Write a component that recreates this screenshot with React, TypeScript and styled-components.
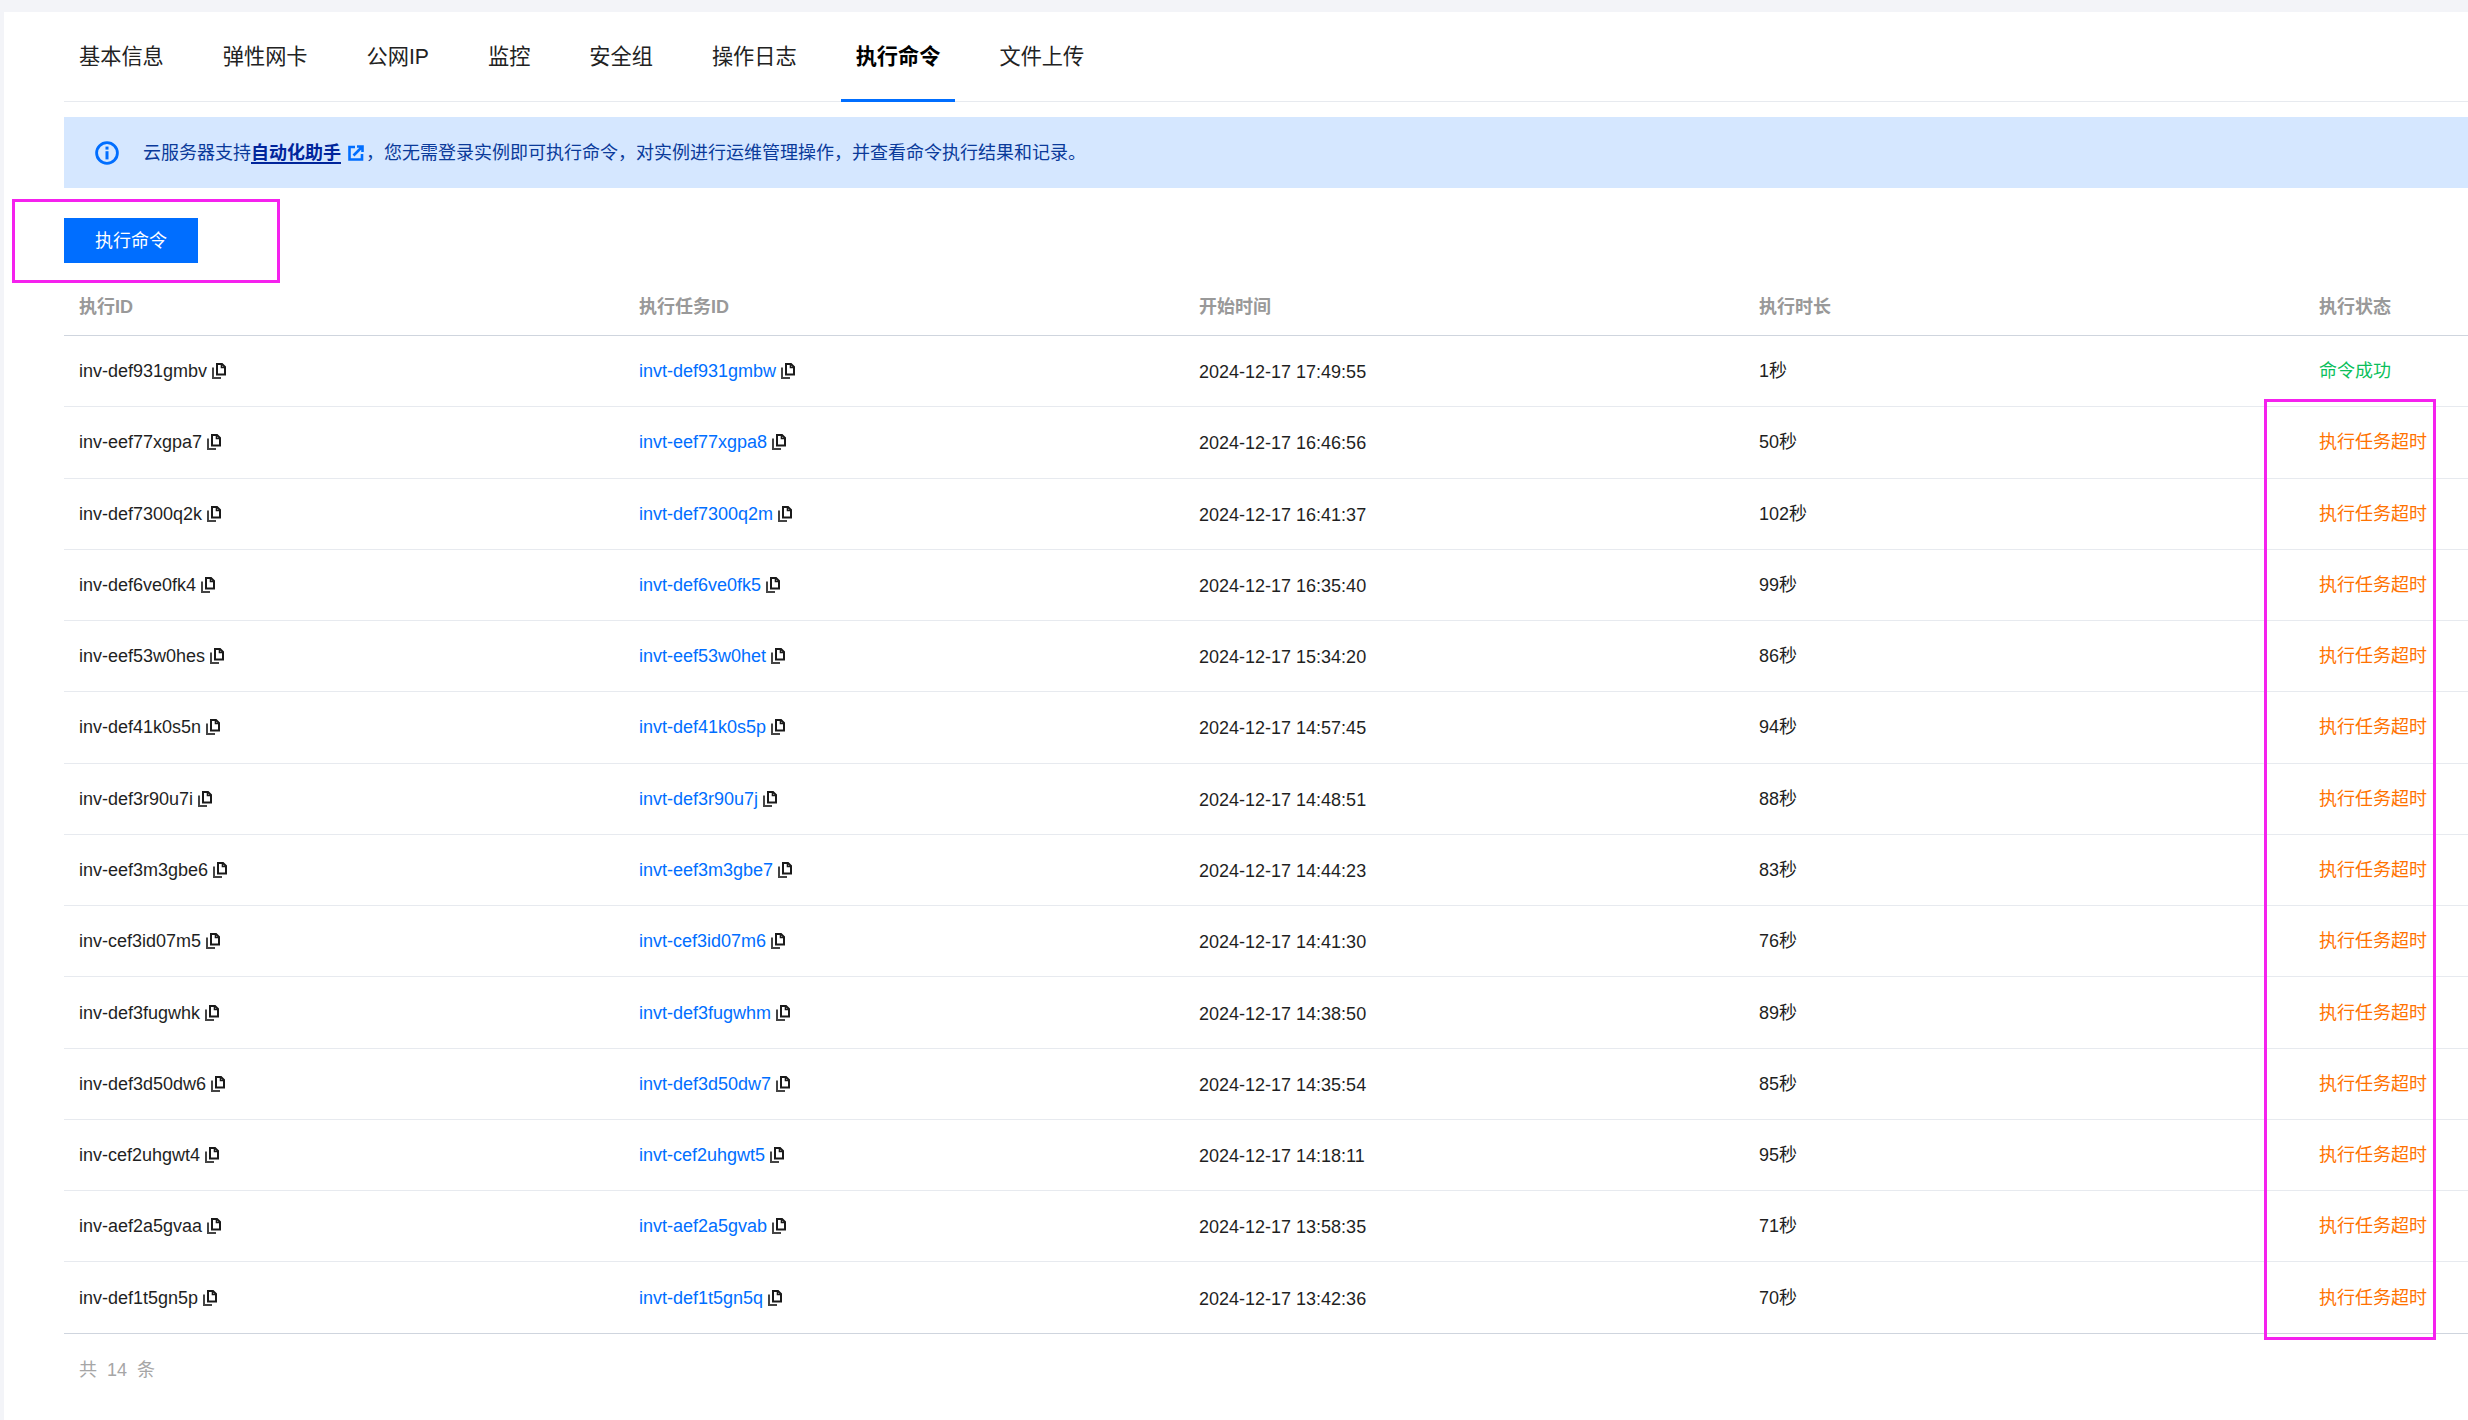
import React from 'react'
import styled, { createGlobalStyle } from 'styled-components'

const rows = [
  ['inv-def931gmbv', 'invt-def931gmbw', '2024-12-17 17:49:55', '1秒', '命令成功'],
  ['inv-eef77xgpa7', 'invt-eef77xgpa8', '2024-12-17 16:46:56', '50秒', '执行任务超时'],
  ['inv-def7300q2k', 'invt-def7300q2m', '2024-12-17 16:41:37', '102秒', '执行任务超时'],
  ['inv-def6ve0fk4', 'invt-def6ve0fk5', '2024-12-17 16:35:40', '99秒', '执行任务超时'],
  ['inv-eef53w0hes', 'invt-eef53w0het', '2024-12-17 15:34:20', '86秒', '执行任务超时'],
  ['inv-def41k0s5n', 'invt-def41k0s5p', '2024-12-17 14:57:45', '94秒', '执行任务超时'],
  ['inv-def3r90u7i', 'invt-def3r90u7j', '2024-12-17 14:48:51', '88秒', '执行任务超时'],
  ['inv-eef3m3gbe6', 'invt-eef3m3gbe7', '2024-12-17 14:44:23', '83秒', '执行任务超时'],
  ['inv-cef3id07m5', 'invt-cef3id07m6', '2024-12-17 14:41:30', '76秒', '执行任务超时'],
  ['inv-def3fugwhk', 'invt-def3fugwhm', '2024-12-17 14:38:50', '89秒', '执行任务超时'],
  ['inv-def3d50dw6', 'invt-def3d50dw7', '2024-12-17 14:35:54', '85秒', '执行任务超时'],
  ['inv-cef2uhgwt4', 'invt-cef2uhgwt5', '2024-12-17 14:18:11', '95秒', '执行任务超时'],
  ['inv-aef2a5gvaa', 'invt-aef2a5gvab', '2024-12-17 13:58:35', '71秒', '执行任务超时'],
  ['inv-def1t5gn5p', 'invt-def1t5gn5q', '2024-12-17 13:42:36', '70秒', '执行任务超时'],
]

const tabs = ['基本信息', '弹性网卡', '公网IP', '监控', '安全组', '操作日志', '执行命令', '文件上传']
const heads = ['执行ID', '执行任务ID', '开始时间', '执行时长', '执行状态']

const CopyIcon: React.FC = () => (
  <CopySvg viewBox="0 0 14 16" aria-hidden="true">
    <path d="M5 1h5l3 3v7.5H5z" fill="none" stroke="#1a1a1a" strokeWidth="2" />
    <path d="M9.5 1v3.5H13" fill="none" stroke="#1a1a1a" strokeWidth="1.6" />
    <path d="M1 4.5V15h8" fill="none" stroke="#444" strokeWidth="2" />
  </CopySvg>
)

const App: React.FC = () => (
  <>
    <GlobalStyle />
    <Panel>
      <TabBar>
        {tabs.map((t) => (
          <Tab key={t} $active={t === '执行命令'}>{t}</Tab>
        ))}
      </TabBar>
      <Notice>
        <svg width="24" height="24" viewBox="0 0 24 24" aria-hidden="true">
          <circle cx="12" cy="12" r="10.4" fill="none" stroke="#006eff" strokeWidth="2.8" />
          <rect x="10.5" y="5.6" width="3" height="3" fill="#006eff" />
          <rect x="10.5" y="10.2" width="3" height="8.2" fill="#006eff" />
        </svg>
        <NoticeText>
          云服务器支持<NoticeLink>自动化助手</NoticeLink>
          <ExternalSvg viewBox="0 0 16 16" aria-hidden="true">
            <path d="M7 2H1.5v12.5H14V9" fill="none" stroke="#006eff" strokeWidth="2.6" />
            <path d="M5.5 10.5 13.5 2.5M9 1.5h5.5V7" fill="none" stroke="#006eff" strokeWidth="2.6" />
          </ExternalSvg>
          ，您无需登录实例即可执行命令，对实例进行运维管理操作，并查看命令执行结果和记录。
        </NoticeText>
      </Notice>
      <Toolbar>
        <PrimaryButton>执行命令</PrimaryButton>
      </Toolbar>
      <HeadRow>
        {heads.map((h) => (
          <HeadCell key={h}>{h}</HeadCell>
        ))}
      </HeadRow>
      {rows.map((r) => (
        <Row key={r[0]}>
          <Cell>{r[0]}<CopyIcon /></Cell>
          <Cell $color="#006eff">{r[1]}<CopyIcon /></Cell>
          <TimeCell>{r[2]}</TimeCell>
          <Cell>{r[3]}</Cell>
          <Cell $color={r[4] === '命令成功' ? '#0abf5b' : '#ff7200'}>{r[4]}</Cell>
        </Row>
      ))}
      <Footer>共 14 条</Footer>
    </Panel>
    <ButtonMark />
    <StatusMark />
  </>
)

const GlobalStyle = createGlobalStyle`
  html, body {
    margin: 0;
    height: 1420px;
    overflow: hidden;
    background: #f3f4f8;
  }
  body {
    font-family: "Liberation Sans", "Noto Sans CJK SC", sans-serif;
    font-size: 18px;
    line-height: 24px;
    color: #1f1f1f;
  }
`

const Panel = styled.div`
  margin: 12px 0 0 4px;
  height: 1408px;
  padding-left: 60px;
  background: #fff;
  overflow: hidden;
`

const TabBar = styled.div`
  display: flex;
  gap: 29px;
  height: 90px;
  box-sizing: border-box;
  border-bottom: 1px solid #e7eaef;
`

const Tab = styled.div<{ $active?: boolean }>`
  height: 90px;
  box-sizing: border-box;
  padding: 0 15px;
  line-height: 90px;
  font-size: 21.2px;
  font-weight: ${(p) => (p.$active ? 700 : 400)};
  color: ${(p) => (p.$active ? '#000' : '#222')};
  border-bottom: 3px solid ${(p) => (p.$active ? '#006eff' : 'transparent')};
`

const Notice = styled.div`
  display: flex;
  align-items: center;
  gap: 24px;
  height: 71px;
  margin-top: 15px;
  padding-left: 31px;
  background: #d5e7ff;
`

const NoticeText = styled.div`
  display: flex;
  align-items: center;
  color: #0a3a9a;
  font-size: 18px;
`

const NoticeLink = styled.span`
  font-weight: 700;
  color: #00259b;
  text-decoration: underline;
  text-decoration-thickness: 2px;
  text-underline-offset: 3px;
`

const ExternalSvg = styled.svg`
  width: 16px;
  height: 16px;
  margin: 0 2px 0 7px;
`

const Toolbar = styled.div`
  display: flex;
  padding-top: 30px;
`

const PrimaryButton = styled.button`
  width: 134px;
  height: 45px;
  padding: 0;
  border: 0;
  background: #006eff;
  color: #fff;
  font: inherit;
`

const HeadRow = styled.div`
  display: grid;
  grid-template-columns: repeat(5, 560px);
  height: 73px;
  box-sizing: border-box;
  padding-top: 17px;
  border-bottom: 1px solid #cfd5de;
`

const HeadCell = styled.div`
  padding-left: 15px;
  line-height: 54px;
  font-weight: 700;
  color: #999;
`

const Row = styled.div`
  display: grid;
  grid-template-columns: repeat(5, 560px);
  height: 71.28px;
  box-sizing: border-box;
  border-bottom: 1px solid #e7eaef;

  &:nth-last-child(2) {
    border-bottom-color: #cfd5de;
  }
`

const Cell = styled.div<{ $color?: string }>`
  display: flex;
  align-items: center;
  padding-left: 15px;
  color: ${(p) => p.$color || '#1f1f1f'};
`

const TimeCell = styled(Cell)`
  padding-top: 2px;
`

const CopySvg = styled.svg`
  width: 14px;
  height: 16px;
  margin-left: 5px;
`

const Footer = styled.div`
  padding: 24px 0 0 15px;
  color: #a6a6a6;
  word-spacing: 5px;
`

const ButtonMark = styled.div`
  position: absolute;
  left: 12px;
  top: 199px;
  width: 268px;
  height: 84px;
  box-sizing: border-box;
  border: 3px solid #f521ee;
`

const StatusMark = styled.div`
  position: absolute;
  left: 2264px;
  top: 399px;
  width: 172px;
  height: 941px;
  box-sizing: border-box;
  border: 3px solid #f521ee;
`

export default App
